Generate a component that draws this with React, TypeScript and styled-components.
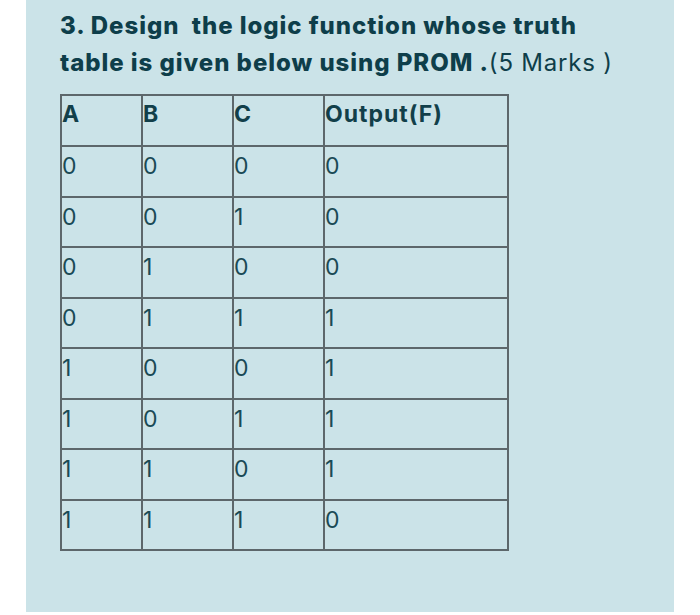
import styled, { createGlobalStyle } from 'styled-components';

const rows = [
  [0, 0, 0, 0],
  [0, 0, 1, 0],
  [0, 1, 0, 0],
  [0, 1, 1, 1],
  [1, 0, 0, 1],
  [1, 0, 1, 1],
  [1, 1, 0, 1],
  [1, 1, 1, 0],
];

const headers = ['A', 'B', 'C', 'Output(F)'];
const widths = [81, 91, 91, 184];

/**
 * 진리표 문제 카드
 */
const App = () => {
  return (
    <>
      <GlobalStyle />
      <Page>
        <Panel>
          <Title>
            3. Design&nbsp; the logic function whose truth
            <br />
            table is given below using PROM .<Marks>(5 Marks )</Marks>
          </Title>

          <TruthTable>
            <colgroup>
              {widths.map((w, idx) => (
                <col key={idx} style={{ width: w }} />
              ))}
            </colgroup>
            <thead>
              <tr>
                {headers.map((h) => (
                  <HeadCell key={h}>{h}</HeadCell>
                ))}
              </tr>
            </thead>
            <tbody>
              {rows.map((row, idx) => (
                <tr key={idx}>
                  {row.map((v, i) => (
                    <Cell key={i}>{v}</Cell>
                  ))}
                </tr>
              ))}
            </tbody>
          </TruthTable>
        </Panel>
      </Page>
    </>
  );
};

const GlobalStyle = createGlobalStyle`
  html,
  body {
    margin: 0;
    padding: 0;
    background: #ffffff;
  }
`;

const Page = styled.main`
  width: 700px;
  height: 615px;
  padding: 0 26px;
  box-sizing: border-box;
  font-family: Inter, 'Noto Sans', sans-serif;
`;

const Panel = styled.section`
  height: 612px;
  padding: 7px 0 0 34px;
  box-sizing: border-box;
  background: #cbe3e8;
`;

const Title = styled.h1`
  margin: 0 0 13px;
  font-size: 24px;
  font-weight: 800;
  line-height: 37px;
  letter-spacing: 0.95px;
  white-space: nowrap;
  color: #0e3e4a;
`;

const Marks = styled.span`
  font-weight: 400;
  letter-spacing: 0.8px;
`;

const TruthTable = styled.table`
  border-collapse: collapse;
  table-layout: fixed;
  width: 447px;
  color: #123f4a;
`;

const HeadCell = styled.th`
  height: 51px;
  padding: 4px 0 0 0;
  box-sizing: border-box;
  border: 2px solid #5d676b;
  vertical-align: top;
  text-align: left;
  font-size: 23px;
  font-weight: 700;
  line-height: 28px;
  letter-spacing: 1px;
`;

const Cell = styled.td`
  height: 50.5px;
  padding: 4px 0 0 0;
  box-sizing: border-box;
  border: 2px solid #5d676b;
  vertical-align: top;
  text-align: left;
  font-size: 23px;
  font-weight: 400;
  line-height: 30px;
  color: #1a4a55;
`;

export default App;
